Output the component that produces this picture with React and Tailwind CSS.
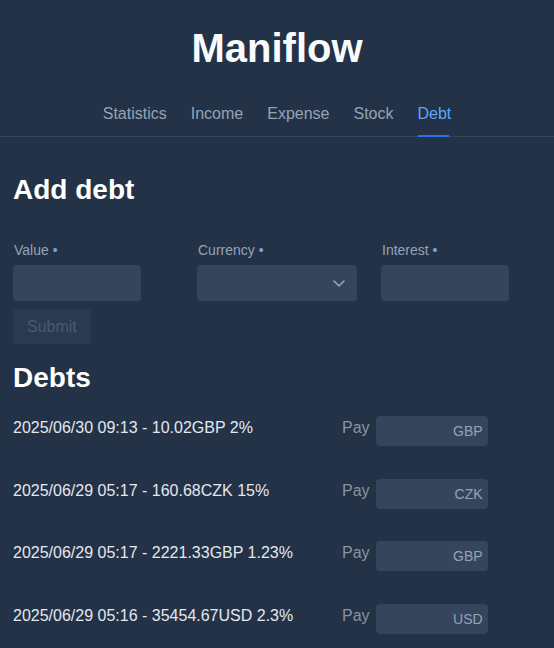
import React from 'react';

const tabs = ['Statistics', 'Income', 'Expense', 'Stock', 'Debt'];

const debts = [
    { date: '2025/06/30 09:13', value: '10.02', currency: 'GBP', interest: '2%' },
    { date: '2025/06/29 05:17', value: '160.68', currency: 'CZK', interest: '15%' },
    { date: '2025/06/29 05:17', value: '2221.33', currency: 'GBP', interest: '1.23%' },
    { date: '2025/06/29 05:16', value: '35454.67', currency: 'USD', interest: '2.3%' },
];

const Label = ({ children }) => (
    <label className="block pl-px text-sm leading-5 text-[#94a3b8] mb-[5px]">
        {children} <span className="text-[#6aa6f0]">•</span>
    </label>
);

const App = () => {
    return (
        <div className="min-h-screen bg-[#233246] font-['Liberation_Sans',Arial,sans-serif]">
            {/* Header */}
            <header className="pt-6">
                <h1 className="text-center text-[40px] leading-[48px] font-bold text-[#f8fafc]">Maniflow</h1>
                <nav className="mt-5 flex justify-center gap-6 border-b border-[#34445a]">
                    {tabs.map((tab) => (
                        <a
                            key={tab}
                            href="#"
                            className={`relative py-2.5 text-base leading-6 ${tab === 'Debt' ? 'text-[#60a5fa]' : 'text-[#94a3b8]'}`}
                        >
                            {tab}
                            {tab === 'Debt' && (
                                <span className="absolute left-px right-[2px] -bottom-px h-[2px] bg-[#2a72e5]" />
                            )}
                        </a>
                    ))}
                </nav>
            </header>

            <main className="px-[13px] pt-[35px]">
                {/* Add debt form */}
                <h2 className="text-[28px] leading-9 font-bold text-white">Add debt</h2>
                <div className="mt-8 flex gap-6">
                    <div className="w-40">
                        <Label>Value</Label>
                        <input className="w-32 h-9 rounded bg-[#35465c] px-3 text-[#e2e8f0] outline-none" />
                    </div>
                    <div className="w-40">
                        <Label>Currency</Label>
                        <button className="w-40 h-9 rounded bg-[#35465c] pr-3 flex items-center justify-end">
                            <svg width="12" height="7" viewBox="0 0 12 7" fill="none">
                                <path d="M1 1l5 5 5-5" stroke="#94a3b8" strokeWidth="1.6" strokeLinecap="round" strokeLinejoin="round" />
                            </svg>
                        </button>
                    </div>
                    <div className="w-40">
                        <Label>Interest</Label>
                        <input className="w-32 h-9 rounded bg-[#35465c] px-3 text-[#e2e8f0] outline-none" />
                    </div>
                </div>
                <button disabled className="mt-2 h-[35px] px-3.5 rounded bg-[#2a3a50] text-base text-[#4b5b71]">
                    Submit
                </button>

                {/* Debt list */}
                <h2 className="mt-4 text-[28px] leading-9 font-bold text-white">Debts</h2>
                <div className="mt-5 flex flex-col gap-[32.67px]">
                    {debts.map((d, i) => (
                        <div key={i} className="flex items-start">
                            <div className="w-[329px] text-base leading-6 text-[#e2e8f0]">
                                {d.date} - {d.value}{d.currency} {d.interest}
                            </div>
                            <span className="mr-[6px] text-base leading-6 text-[#8a939f]">Pay</span>
                            <input
                                placeholder={d.currency}
                                className="w-28 h-[30px] rounded bg-[#35465c] pr-[5px] pl-2 text-right text-sm text-[#e2e8f0] placeholder:text-[#94a3b8] outline-none"
                            />
                        </div>
                    ))}
                </div>
            </main>
        </div>
    );
};

export default App;
